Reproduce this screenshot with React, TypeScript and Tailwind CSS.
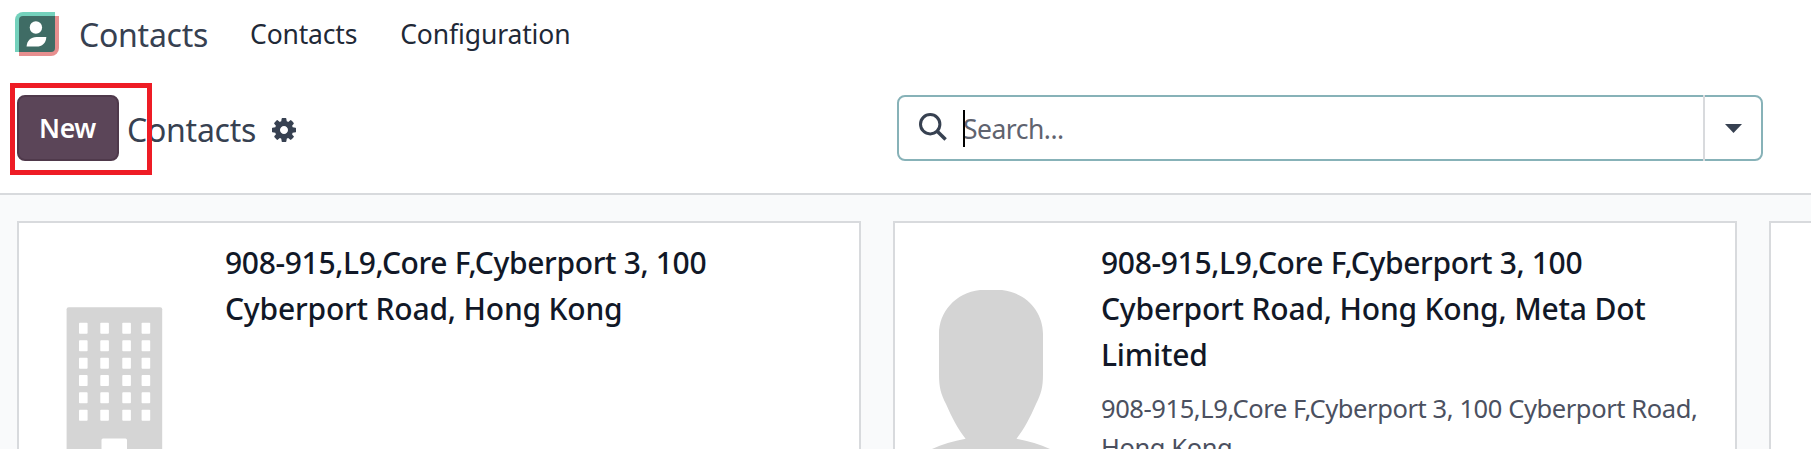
import type { ReactNode } from "react";

const WINDOW_COLUMNS = [79, 100.3, 122.3, 141.6];
const WINDOW_ROWS = [322.7, 340.2, 357.7, 375.1, 392.3, 409.7];

function AppLogo() {
  return (
    <svg className="block h-11 w-11" viewBox="0 0 44 44">
      <path d="M8 0H40V32a8 8 0 0 1-8 8H0V8a8 8 0 0 1 8-8Z" fill="#74d1bc" />
      <path d="M12 4H44V36a8 8 0 0 1-8 8H4V12a8 8 0 0 1 8-8Z" fill="#e78f8f" />
      <path d="M8 4H40V36a4 4 0 0 1-4 4H4V8a4 4 0 0 1 4-4Z" fill="#3f6c65" />
      <circle cx="20.900" cy="15.500" r="6.200" fill="#fff" />
      <path d="M11.600 34.600C11.800 28.500 16 25 21.500 25H31.300C31.200 31 27 34.600 21.500 34.600Z" fill="#fff" />
    </svg>
  );
}

function GearIcon() {
  return (
    <svg className="block h-6 w-6" viewBox="0 0 1536 1536" fill="#374151">
      <path d="M1024 768q0-106-75-181t-181-75-181 75-75 181 75 181 181 75 181-75 75-181zm512-109v222q0 12-8 23t-20 13l-185 28q-19 54-39 91 35 50 107 138 10 12 10 25t-9 23q-27 37-99 108t-94 71q-12 0-26-9l-138-108q-44 23-91 38-16 136-29 186-7 28-36 28H657q-14 0-24.500-8.500T621 1506l-28-184q-49-16-90-37l-141 107q-10 9-25 9-14 0-25-11-126-114-165-168-7-10-7-23 0-12 8-23 15-21 51-66.500t54-70.500q-27-50-41-99L29 913q-13-2-21-12.500T0 877V655q0-12 8-23t19-13l186-28q14-46 39-92-40-57-107-138-10-12-10-24 0-10 9-23 26-36 98.500-107.500T337 135q13 0 26 10l138 107q44-23 91-38 16-136 29-186 7-28 36-28h222q14 0 24.500 8.500T915 30l28 184q49 16 90 37l142-107q9-9 24-9 13 0 25 10 129 119 165 170 7 8 7 22 0 12-8 23-15 21-51 66.500t-54 70.500q26 50 41 98l183 28q13 2 21 12.500t8 23.500z" />
    </svg>
  );
}

function SearchIcon() {
  return (
    <svg className="block h-7 w-7" viewBox="0 0 28 28" fill="none" stroke="#374151">
      <circle cx="11.200" cy="11.200" r="9.700" strokeWidth="3" />
      <path d="M18 18L26.600 26.600" strokeWidth="3.500" />
    </svg>
  );
}

function BuildingPicture() {
  return (
    <svg className="block h-[226px] w-[189px]" viewBox="19 223 189 226">
      <rect x="66.600" y="307.300" width="95.600" height="160" rx="2" fill="#d5d5d5" />
      {WINDOW_ROWS.map((y) =>
        WINDOW_COLUMNS.map((x) => (
          <rect key={`${x}-${y}`} x={x} y={y} width="8.600" height="11" rx="0.800" fill="#fff" />
        )),
      )}
      <rect x="101.500" y="438.500" width="25.500" height="30" rx="1.500" fill="#fff" />
    </svg>
  );
}

function PersonPicture() {
  return (
    <svg className="block h-[226px] w-[189px]" viewBox="895 223 189 226">
      <path
        d="M980 290H1002C1027 293 1043 312 1043 334V374C1043 388 1041 394 1036 404C1030 418 1024 429 1016.500 438.700C1029 441 1040 444.500 1050 449V460H932V449C942 444.500 953 441 965.600 438.700C958 429 952 418 946 404C941 394 939 388 939 374V334C939 312 955 293 980 290Z"
        fill="#d4d4d4"
      />
    </svg>
  );
}

function Card({ picture, title, children }: { picture: ReactNode; title: ReactNode; children?: ReactNode }) {
  return (
    <article className="flex h-[260px] w-[844px] shrink-0 border-2 border-[#d8dadd] bg-white">
      <div className="w-[206px] shrink-0">{picture}</div>
      <div className="pt-[17px]">
        <h2 className="text-[30px] leading-[46px] font-medium tracking-[-0.18px] whitespace-nowrap text-[#111827]">{title}</h2>
        {children}
      </div>
    </article>
  );
}

export default function App() {
  return (
    <div className="flex h-[449px] w-[1811px] flex-col overflow-hidden bg-white font-['Noto_Sans','Liberation_Sans',sans-serif]">
      <nav className="flex h-[67px] shrink-0 items-center pl-[15px]">
        <AppLogo />
        <span className="ml-5 pt-0.5 text-[32px] leading-10 tracking-[-0.25px] text-[#374151]">Contacts</span>
        <a className="ml-[42px] text-[26.500px] leading-10 tracking-[-0.18px] text-[#1f2937]">Contacts</a>
        <a className="ml-[43px] text-[26.500px] leading-10 tracking-[-0.13px] text-[#1f2937]">Configuration</a>
      </nav>

      <header className="flex h-32 shrink-0 items-start border-b-2 border-[#d8dadd] pt-7 pl-[17px]">
        <div className="relative flex h-[66px] w-[880px] items-center">
          <button className="flex h-[66px] w-[102px] items-center justify-center rounded-lg border-2 border-[#4f394b] bg-[#5b4558] pt-px pr-px text-[26.500px] font-semibold tracking-[-0.3px] text-white">
            New
          </button>
          <span className="ml-2 pt-1 text-[32px] leading-10 tracking-[-0.25px] text-[#374151]">Contacts</span>
          <span className="ml-4 pt-1">
            <GearIcon />
          </span>
          <div className="pointer-events-none absolute -top-3 -left-[7px] h-[92px] w-[142px] border-[5px] border-[#ee1c25]" />
        </div>
        <div className="flex h-[66px] w-[866px] items-stretch rounded-lg border-2 border-[#87b2b8] text-[#374151]">
          <div className="flex flex-1 items-center pl-5">
            <span className="-mt-0.5">
              <SearchIcon />
            </span>
            <div className="relative ml-4 flex items-center">
              <span className="pt-0.5 text-[26.500px] leading-10 tracking-[-0.5px] text-[#5f636f]">Search...</span>
              <span className="absolute top-[3px] left-0 h-[37px] w-0.5 bg-black" />
            </div>
          </div>
          <div className="-my-0.5 flex w-[58px] items-center justify-center border-l-2 border-[#d8dadd]">
            <svg className="mt-px block h-[9px] w-[17px]" viewBox="0 0 17 9">
              <path d="M0 0H17L8.500 9Z" fill="#374151" />
            </svg>
          </div>
        </div>
      </header>

      <main className="flex flex-1 gap-8 bg-[#f9fafb] pt-[26px] pl-[17px]">
        <Card
          picture={<BuildingPicture />}
          title={
            <>
              <span className="tracking-[-0.34px]">908-915,L9,Core F,Cyberport 3, 100</span>
              <br />
              Cyberport Road, Hong Kong
            </>
          }
        />
        <Card
          picture={<PersonPicture />}
          title={
            <>
              <span className="tracking-[-0.34px]">908-915,L9,Core F,Cyberport 3, 100</span>
              <br />
              Cyberport Road, Hong Kong, Meta Dot
              <br />
              Limited
            </>
          }
        >
          <p className="mt-[11px] text-[25.500px] leading-[39px] tracking-[-0.41px] whitespace-nowrap text-[#4b5060]">
            908-915,L9,Core F,Cyberport 3, 100 Cyberport Road,
            <br />
            Hong Kong
          </p>
        </Card>
        <Card picture={null} title={null} />
      </main>
    </div>
  );
}
